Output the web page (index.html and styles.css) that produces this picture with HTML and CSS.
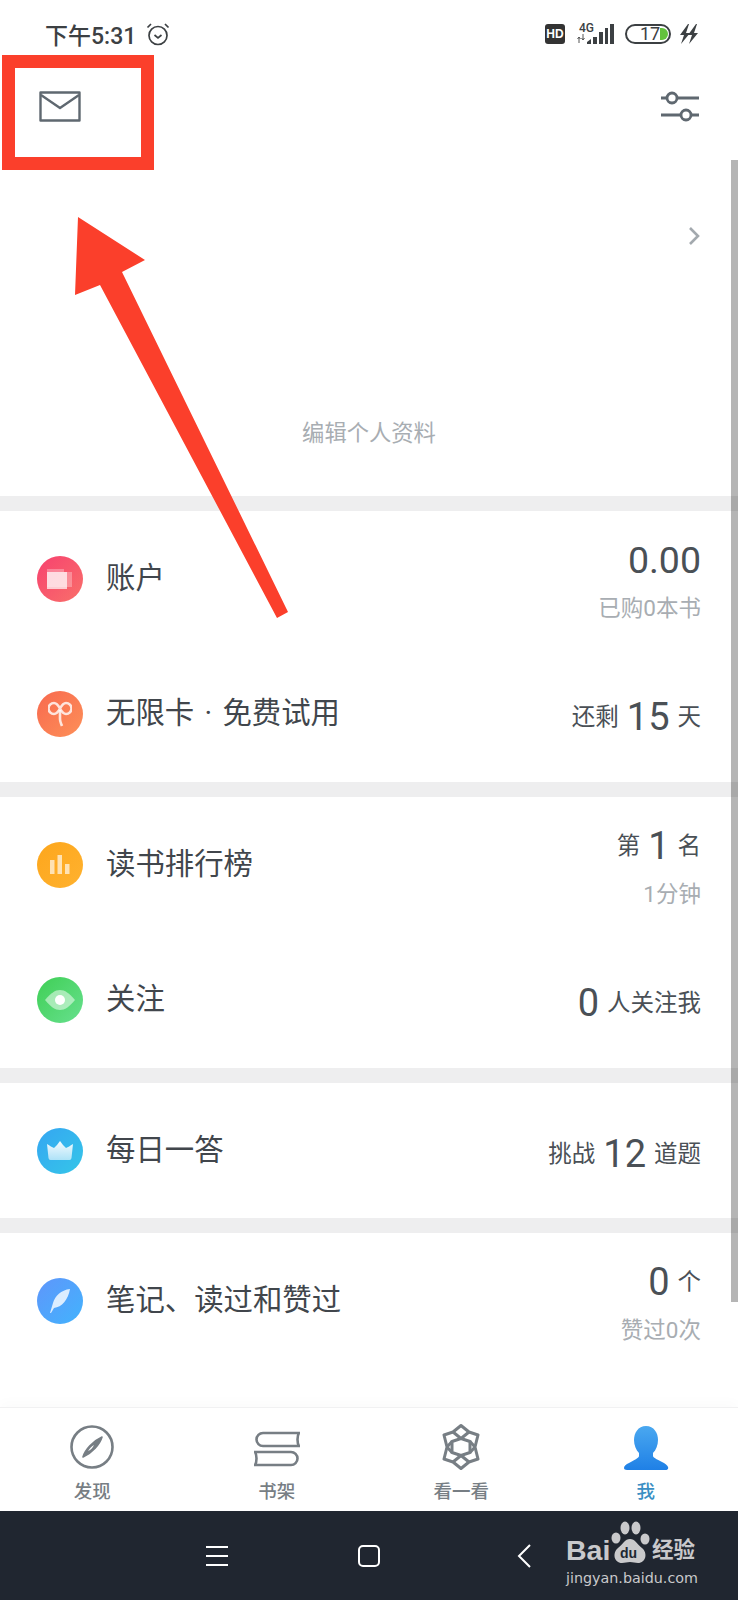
FILE: index.html
```html
<!DOCTYPE html>
<html lang="zh-CN">
<head>
    <meta charset="UTF-8">
    <meta name="viewport" content="width=device-width, initial-scale=1.0">
    <title>我</title>
    <link rel="stylesheet" href="styles.css">
</head>
<body>
    <div class="phone">
        <div class="status-bar">
            <div class="status-left">
                <span class="time">下午5:31</span>
                <svg class="alarm" width="24" height="24" viewBox="0 0 24 24" fill="none" stroke="#3c4043" stroke-width="1.7">
                    <circle cx="12" cy="13.5" r="9"/>
                    <path d="M8.5 13l3.5 3 3.5-3"/>
                    <path d="M1.5 5.5L5 2M22.5 5.5L19 2"/>
                </svg>
            </div>
            <div class="status-right">
                <span class="hd">HD</span>
                <div class="signal">
                    <span class="net">4G</span>
                    <svg width="40" height="20" viewBox="0 0 40 20">
                        <path d="M3 19v-6M1.5 15l1.5-2 1.500 2M7 10v6M5.500 14l1.500 2 1.500-2" stroke="#555" stroke-width="1" fill="none"/>
                        <path d="M11 20v-2l4-3v5zM17 20v-7h4v7zM23 20V8h4v12zM29 20V4h3v16zM34 20V0h4v20z" fill="#3c4043"/>
                    </svg>
                </div>
                <div class="battery">
                    <span class="battery-num">17</span>
                    <span class="battery-fill"></span>
                </div>
                <svg class="bolt" width="20" height="20" viewBox="0 0 20 20" fill="#3c4043">
                    <path d="M9 0L1 11h4L2 20l9-11H7l3-9zM17 0L9 11h4l-3 9 9-11h-4l3-9z"/>
                </svg>
            </div>
        </div>

        <header class="top-bar">
            <svg width="42" height="32" viewBox="0 0 42 32" fill="none" stroke="#5f6870" stroke-width="2.4" stroke-linejoin="round">
                <rect x="1.500" y="1.500" width="39" height="28"/>
                <path d="M2 4l19 13L40 4"/>
            </svg>
            <svg width="40" height="32" viewBox="0 0 40 32" fill="none" stroke="#5f6870" stroke-width="2.800">
                <path d="M1 7h6M18 7h21M1 24h20M32 24h7"/>
                <circle cx="12" cy="7" r="5"/>
                <circle cx="26" cy="24" r="5"/>
            </svg>
        </header>

        <section class="profile">
            <svg class="profile-arrow" width="12" height="20" viewBox="0 0 12 20" fill="none" stroke="#a3a9ae" stroke-width="2.600">
                <path d="M2 2l8 8-8 8"/>
            </svg>
            <div class="profile-edit">编辑个人资料</div>
        </section>

        <section class="group group-pad">
            <div class="row">
                <span class="icon icon-account">
                    <svg width="26" height="20" viewBox="0 0 26 20">
                        <path d="M0 0h17v3h8v15H0z" fill="#fff" opacity=".3"/>
                        <rect x="0" y="3" width="20" height="17" fill="#fff" opacity=".7"/>
                    </svg>
                </span>
                <span class="label">账户</span>
                <div class="value value-two">
                    <div class="line"><span class="num num-price">0.00</span></div>
                    <div class="line sub">已购0本书</div>
                </div>
            </div>
            <div class="row">
                <span class="icon icon-card">
                    <svg width="24" height="26" viewBox="0 0 24 26" fill="none" stroke="#fff" stroke-opacity=".8" stroke-width="2.600">
                        <path d="M6 2a5.500 5.500 0 0 0 0 11c6 0 6-11 12-11a5.500 5.500 0 0 1 0 11C12 13 12 2 6 2z"/>
                        <path d="M12 9v9c0 3 1 4 2 7"/>
                    </svg>
                </span>
                <span class="label label-card">无限卡 · 免费试用</span>
                <div class="value">
                    <div class="line"><span class="unit">还剩</span><span class="num">15</span><span class="unit">天</span></div>
                </div>
            </div>
        </section>

        <section class="group group-pad">
            <div class="row">
                <span class="icon icon-rank">
                    <svg width="20" height="19" viewBox="0 0 20 19" fill="#fff" fill-opacity=".65">
                        <rect x="0" y="5" width="4.500" height="14"/>
                        <rect x="7.500" y="0" width="4.500" height="19"/>
                        <rect x="15" y="9" width="4.500" height="10"/>
                    </svg>
                </span>
                <span class="label">读书排行榜</span>
                <div class="value value-two">
                    <div class="line"><span class="unit">第</span><span class="num">1</span><span class="unit">名</span></div>
                    <div class="line sub">1分钟</div>
                </div>
            </div>
            <div class="row">
                <span class="icon icon-follow">
                    <svg width="30" height="20" viewBox="0 0 30 20">
                        <path d="M0 10C6 3 10 0 15 0s9 3 15 10c-6 7-10 10-15 10S6 17 0 10z" fill="#fff" opacity=".5"/>
                        <circle cx="15" cy="10" r="5" fill="#fff"/>
                    </svg>
                </span>
                <span class="label">关注</span>
                <div class="value">
                    <div class="line"><span class="num">0</span><span class="unit">人关注我</span></div>
                </div>
            </div>
        </section>

        <section class="group">
            <div class="row">
                <span class="icon icon-daily">
                    <svg width="26" height="19" viewBox="0 0 26 19">
                        <defs>
                            <linearGradient id="crown" x1="0" y1="0" x2="0" y2="1">
                                <stop offset="0" stop-color="#fff" stop-opacity=".95"/>
                                <stop offset="1" stop-color="#fff" stop-opacity=".6"/>
                            </linearGradient>
                        </defs>
                        <path d="M0 3c3 2 5 3 7 4 2-2 4-4 6-7 2 3 4 5 6 7 2-1 4-2 7-4l-1.500 14q-.2 2-2 2h-19q-1.800 0-2-2z" fill="url(#crown)"/>
                    </svg>
                </span>
                <span class="label">每日一答</span>
                <div class="value">
                    <div class="line"><span class="unit">挑战</span><span class="num">12</span><span class="unit">道题</span></div>
                </div>
            </div>
        </section>

        <section class="group group-last">
            <div class="row">
                <span class="icon icon-notes">
                    <svg width="20" height="24" viewBox="0 0 20 24">
                        <path d="M20 0C11 1 5 7 3 14L0 24l1 0 3-5c8-1 14-8 16-19z" fill="#fff" fill-opacity=".8"/>
                    </svg>
                </span>
                <span class="label">笔记、读过和赞过</span>
                <div class="value value-two">
                    <div class="line"><span class="num">0</span><span class="unit">个</span></div>
                    <div class="line sub">赞过0次</div>
                </div>
            </div>
        </section>

        <nav class="tab-bar">
            <div class="tab">
                <svg width="46" height="46" viewBox="0 0 46 46" fill="none" stroke="#777e84" stroke-width="2.600">
                    <circle cx="23" cy="23" r="20.500"/>
                    <path d="M14 33c2-7 10-16 19-20-2 7-10 16-19 20z" fill="#777e84" stroke-width="1.600" stroke-linejoin="round"/>
                    <path d="M19 27c2-3 4-5 6-6-1 2-3 5-6 6z" fill="#fff" stroke="none"/>
                </svg>
                <span>发现</span>
            </div>
            <div class="tab">
                <svg class="tab-books" width="46" height="36" viewBox="0 0 46 36" fill="none" stroke="#777e84" stroke-width="2.600">
                    <path d="M45 2H9a6.500 6.500 0 0 0 0 13h36c-2-3-2-10 0-13z"/>
                    <path d="M1 21h36a6.500 6.500 0 0 1 0 13H1c2-3 2-10 0-13z"/>
                </svg>
                <span>书架</span>
            </div>
            <div class="tab">
                <svg width="40" height="46" viewBox="0 0 40 46" fill="none" stroke="#777e84" stroke-width="3" stroke-linejoin="round">
                    <path d="M20 1.500l8 6.500 9 3-3 12 3 12-9 3-8 6.500-8-6.500-9-3 3-12-3-12 9-3z"/>
                    <path d="M12 8l8 6.500L28 8M12 38l8-6.500 8 6.500"/>
                    <path d="M20 14.500l9 3v11l-9 3-9-3v-11z"/>
                    <path d="M6 23l5-5.500M34 23l-5-5.500M6 23l5 5.500M34 23l-5 5.500"/>
                </svg>
                <span>看一看</span>
            </div>
            <div class="tab tab-active">
                <svg width="46" height="44" viewBox="0 0 46 44">
                    <defs>
                        <linearGradient id="me" x1="0" y1="0" x2="0" y2="1">
                            <stop offset="0" stop-color="#4aa8f0"/>
                            <stop offset="1" stop-color="#1f80e6"/>
                        </linearGradient>
                    </defs>
                    <path d="M23 0c8 0 12 7 12 14 0 5-2 10-5 13v3c0 2 6 4 11 7 3 2 5 4 4 6-1 1-2 1-3 1H4c-2 0-3-1-3-2 0-2 2-4 5-5 5-3 10-5 10-7v-3c-3-3-5-8-5-13C11 7 15 0 23 0z" fill="url(#me)"/>
                </svg>
                <span>我</span>
            </div>
        </nav>

        <div class="nav-bar">
            <svg class="nav-menu" width="22" height="20" viewBox="0 0 22 20" stroke="#fff" stroke-width="2">
                <path d="M0 1h22M0 10h22M0 19h22"/>
            </svg>
            <svg class="nav-home" width="22" height="22" viewBox="0 0 22 22" fill="none" stroke="#fff" stroke-width="2">
                <rect x="1" y="1" width="20" height="20" rx="4"/>
            </svg>
            <svg class="nav-back" width="14" height="24" viewBox="0 0 14 24" fill="none" stroke="#fff" stroke-width="2">
                <path d="M13 1L2 12l11 11"/>
            </svg>
            <div class="watermark">
                <div class="wm-top">
                    <span class="wm-bai">Bai</span>
                    <svg class="wm-paw" width="40" height="42" viewBox="0 0 40 42" fill="#c9c9cb">
                        <ellipse cx="6" cy="17" rx="4.500" ry="5.500"/>
                        <ellipse cx="15" cy="7" rx="4.500" ry="6.500"/>
                        <ellipse cx="26" cy="7" rx="4.500" ry="6.500"/>
                        <ellipse cx="35" cy="18" rx="4.500" ry="5.500"/>
                        <path d="M20 18c5 0 7 5 12 9 6 5 4 15-4 15-3 0-5-1-8-1s-5 1-8 1C4 42 2 32 8 27c5-4 7-9 12-9z"/>
                    </svg>
                    <span class="wm-du">du</span>
                    <span class="wm-cn">经验</span>
                </div>
                <div class="wm-url">jingyan.baidu.com</div>
            </div>
        </div>

        <div class="scrollbar"></div>
        <div class="mark-box"></div>
        <svg class="mark-arrow" width="240" height="420" viewBox="0 0 240 420">
            <path d="M6 0L3 78 28 68 205 401 216 395 50 55 73 43z" fill="#fb3f2b"/>
        </svg>
    </div>
</body>
</html>
```

FILE: styles.css
```css
* { box-sizing: border-box; }
html, body { margin: 0; padding: 0; }
body { font-family: Roboto, "Noto Sans CJK SC", sans-serif; background: #fff; color: #41464c; }

.phone { position: relative; width: 738px; height: 1600px; overflow: hidden; background: #fff; }

.status-bar { height: 62px; padding: 6px 39px 0 45px; display: flex; justify-content: space-between; align-items: center; }
.status-left { display: flex; align-items: center; gap: 10px; }
.time { font-size: 23px; font-weight: 500; color: #3c4043; }
.status-right { display: flex; align-items: center; }
.hd { width: 20px; height: 20px; background: #333; border-radius: 3px; color: #fff; font: 700 12px/20px "Liberation Sans", sans-serif; text-align: center; }
.signal { position: relative; width: 40px; height: 20px; margin-left: 11px; }
.net { position: absolute; left: 3px; top: -2px; font: 500 12px/12px Roboto, sans-serif; color: #3c4043; }
.battery { position: relative; width: 46px; height: 20px; border: 2px solid #3c4043; border-radius: 10px; margin-left: 9px; }
.battery-num { position: absolute; left: 13px; top: -2px; font: 400 18px/20px Roboto, sans-serif; color: #3c4043; }
.battery-fill { position: absolute; right: 1px; top: 2px; width: 8px; height: 12px; background: #63c23c; border-radius: 0 6px 6px 0; }
.bolt { margin-left: 8px; }

.top-bar { height: 98px; padding: 29px 38px 0 39px; display: flex; justify-content: space-between; align-items: flex-start; }

.profile { position: relative; height: 336px; display: flex; flex-direction: column; align-items: center; justify-content: flex-end; padding-bottom: 48px; }
.profile-arrow { position: absolute; top: 66px; right: 38px; }
.profile-edit { font-size: 22.300px; line-height: 30px; color: #a8adb2; }

.group { border-top: 15px solid #eeeeef; }
.group-pad { padding-bottom: 1px; }
.group-last { height: 189px; }

.row { height: 135px; padding: 0 37px; display: flex; align-items: center; }
.icon { width: 46px; height: 46px; border-radius: 50%; display: flex; align-items: center; justify-content: center; flex: none; }
.icon-account { background: linear-gradient(135deg, #f7416f, #f9706a); }
.icon-card { background: linear-gradient(135deg, #f8694f, #fd9058); }
.icon-rank { background: linear-gradient(135deg, #fda61c, #ffb22f); }
.icon-follow { background: linear-gradient(135deg, #3fcf55, #67e08e); }
.icon-daily { background: linear-gradient(135deg, #35a6f2, #35c6e8); }
.icon-notes { background: linear-gradient(135deg, #5f96fb, #42b3fd); }

.label { margin-left: 23px; padding-bottom: 1px; font-size: 29.400px; line-height: 40px; color: #41464c; white-space: nowrap; flex: 1; }
.label-card { word-spacing: 3px; }
.value { margin-top: 6px; text-align: right; white-space: nowrap; }
.value-two { margin-top: 10px; }
.line { line-height: 48px; height: 48px; display: flex; justify-content: flex-end; align-items: center; gap: 8px; }
.num { font-size: 38px; color: #4a5056; }
.num-price { font-size: 37.500px; }
.unit { font-size: 23.500px; color: #4a5056; }
.sub { font-size: 22.500px; color: #a8adb2; }

.tab-bar { height: 104px; background: #fff; border-top: 1px solid #f1f1f2; box-shadow: 0 -6px 10px rgba(0,0,0,.015); display: grid; grid-template-columns: repeat(4, 1fr); }
.tab { display: flex; flex-direction: column; align-items: center; justify-content: flex-end; height: 103px; padding-bottom: 6px; font-size: 18.500px; font-weight: 500; line-height: 26px; color: #777e84; gap: 9px; }
.tab svg { display: block; }
.tab svg.tab-books { margin-bottom: 3px; }
.tab-active { color: #3a8fc4; }

.nav-bar { height: 89px; padding-left: 206px; background: #202630; display: flex; align-items: center; }
.nav-home { margin-left: 130px; }
.nav-back { margin-left: 137px; }

.watermark { align-self: flex-start; margin: 10px 0 0 35px; width: 136px; color: #c9c9cb; }
.wm-top { position: relative; height: 44px; }
.wm-bai { position: absolute; left: 0; top: 13px; font: 700 28.500px/32px "Liberation Sans", sans-serif; }
.wm-paw { position: absolute; left: 44px; top: 0; }
.wm-du { position: absolute; left: 54px; top: 24px; font: 700 14px/16px "Liberation Sans", sans-serif; color: #202630; }
.wm-cn { position: absolute; left: 86px; top: 15px; font-size: 21.500px; font-weight: 700; line-height: 28px; }
.wm-url { margin-top: 3px; font: 400 14.300px/20px "DejaVu Sans", sans-serif; white-space: nowrap; }

.scrollbar { position: absolute; right: 0; top: 160px; width: 7px; height: 1142px; background: rgba(0,0,0,.29); }
.mark-box { position: absolute; left: 2px; top: 55px; width: 152px; height: 115px; border: 13px solid #fb3f2b; }
.mark-arrow { position: absolute; left: 72px; top: 217px; }
```
